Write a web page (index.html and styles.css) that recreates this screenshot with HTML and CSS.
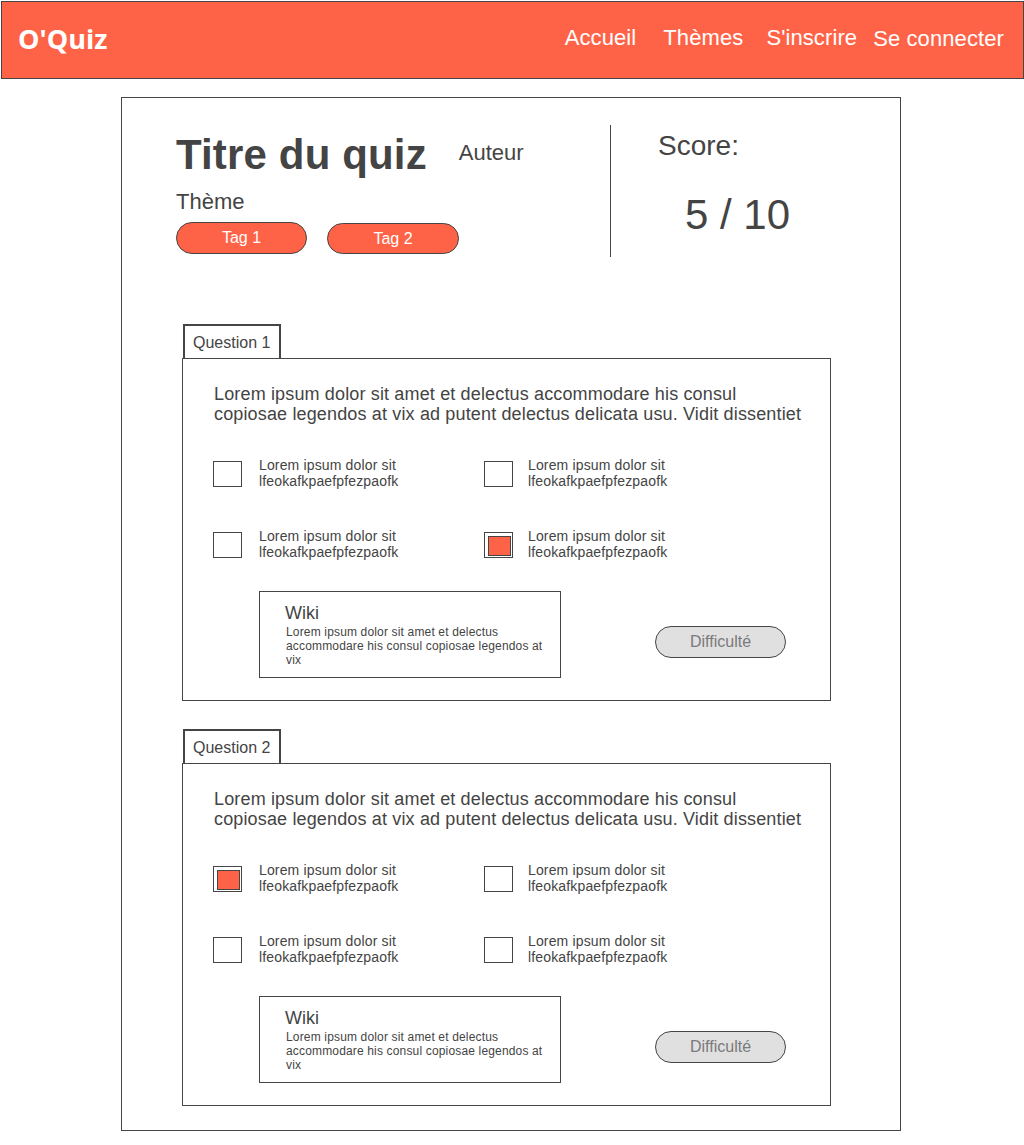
FILE: index.html
```html
<!DOCTYPE html>
<html lang="fr">
<head>
<meta charset="utf-8">
<title>O'Quiz</title>
<link rel="stylesheet" href="styles.css">
</head>
<body>
<header class="topbar">
  <div class="logo">O'Quiz</div>
  <nav class="nav">
    <a class="nav-link nav-link--home" href="#">Accueil</a>
    <a class="nav-link nav-link--themes" href="#">Thèmes</a>
    <a class="nav-link nav-link--signup" href="#">S'inscrire</a>
    <a class="nav-link nav-link--login" href="#">Se connecter</a>
  </nav>
</header>

<main class="quiz">
  <section class="quiz-head">
    <div class="quiz-info">
      <div class="title-row">
        <h1 class="quiz-title">Titre du quiz</h1>
        <span class="quiz-author">Auteur</span>
      </div>
      <div class="quiz-theme">Thème</div>
      <div class="tags">
        <span class="tag">Tag 1</span>
        <span class="tag tag--second">Tag 2</span>
      </div>
    </div>
    <div class="score">
      <div class="score-label">Score:</div>
      <div class="score-value">5 / 10</div>
    </div>
  </section>

  <section class="questions">
    <article class="question">
      <div class="question-tab">Question 1</div>
      <div class="question-box">
        <p class="question-text">Lorem ipsum dolor sit amet et delectus accommodare his consul copiosae legendos at vix ad putent delectus delicata usu. Vidit dissentiet</p>
        <div class="answers">
          <label class="answer"><span class="check"></span><span class="answer-text">Lorem ipsum dolor sit<br>lfeokafkpaefpfezpaofk</span></label>
          <label class="answer"><span class="check"></span><span class="answer-text">Lorem ipsum dolor sit<br>lfeokafkpaefpfezpaofk</span></label>
          <label class="answer"><span class="check"></span><span class="answer-text">Lorem ipsum dolor sit<br>lfeokafkpaefpfezpaofk</span></label>
          <label class="answer"><span class="check check--on"></span><span class="answer-text">Lorem ipsum dolor sit<br>lfeokafkpaefpfezpaofk</span></label>
        </div>
        <div class="question-foot">
          <div class="wiki">
            <div class="wiki-title">Wiki</div>
            <p class="wiki-text">Lorem ipsum dolor sit amet et delectus accommodare his consul copiosae legendos at vix</p>
          </div>
          <span class="difficulty">Difficulté</span>
        </div>
      </div>
    </article>

    <article class="question">
      <div class="question-tab">Question 2</div>
      <div class="question-box">
        <p class="question-text">Lorem ipsum dolor sit amet et delectus accommodare his consul copiosae legendos at vix ad putent delectus delicata usu. Vidit dissentiet</p>
        <div class="answers">
          <label class="answer"><span class="check check--on"></span><span class="answer-text">Lorem ipsum dolor sit<br>lfeokafkpaefpfezpaofk</span></label>
          <label class="answer"><span class="check"></span><span class="answer-text">Lorem ipsum dolor sit<br>lfeokafkpaefpfezpaofk</span></label>
          <label class="answer"><span class="check"></span><span class="answer-text">Lorem ipsum dolor sit<br>lfeokafkpaefpfezpaofk</span></label>
          <label class="answer"><span class="check"></span><span class="answer-text">Lorem ipsum dolor sit<br>lfeokafkpaefpfezpaofk</span></label>
        </div>
        <div class="question-foot">
          <div class="wiki">
            <div class="wiki-title">Wiki</div>
            <p class="wiki-text">Lorem ipsum dolor sit amet et delectus accommodare his consul copiosae legendos at vix</p>
          </div>
          <span class="difficulty">Difficulté</span>
        </div>
      </div>
    </article>
  </section>
</main>
</body>
</html>
```

FILE: styles.css
```css
* { box-sizing: border-box; }

html, body {
  margin: 0;
  padding: 0;
  background: #ffffff;
}

body {
  font-family: "Liberation Sans", Arial, sans-serif;
  color: #444444;
}

/* ---------- Top bar ---------- */
.topbar {
  margin: 1px 0 0 1px;
  width: 1023px;
  height: 78px;
  background: #ff6347;
  border: 1px solid #454545;
  display: flex;
  align-items: center;
  padding: 0 0 0 16px;
}

.logo {
  font-family: "Open Sans", "Noto Sans", sans-serif;
  font-weight: 700;
  font-size: 27px;
  line-height: 30px;
  color: #ffffff;
  margin-top: -3px;
}

.nav {
  display: flex;
  align-items: center;
  margin-left: auto;
  margin-right: 19px;
}

.nav-link {
  font-size: 22px;
  line-height: 26px;
  color: #ffffff;
  text-decoration: none;
  margin-top: -4px;
  letter-spacing: 0.1px;
}

.nav-link--themes { margin-left: 27px; }
.nav-link--signup { margin-left: 23px; }
.nav-link--login { margin-left: 16px; margin-top: -2px; }

/* ---------- Quiz card ---------- */
.quiz {
  margin: 18px 0 0 121px;
  width: 780px;
  height: 1034px;
  border: 1px solid #454545;
  padding: 27px 0 0 0;
}

.quiz-head {
  display: flex;
  height: 132px;
}

.quiz-info {
  width: 488px;
  padding: 6px 0 0 54px;
}

.title-row {
  display: flex;
  align-items: flex-start;
}

.quiz-title {
  margin: 0;
  font-size: 42px;
  line-height: 48px;
  font-weight: 700;
  color: #444444;
  letter-spacing: 0.15px;
}

.quiz-author {
  margin: 9px 0 0 32px;
  font-size: 22px;
  line-height: 26px;
}

.quiz-theme {
  margin-top: 10px;
  font-size: 22px;
  line-height: 26px;
}

.tags {
  display: flex;
  margin-top: 7px;
}

.tag {
  width: 131px;
  height: 32px;
  border-radius: 16px;
  background: #ff6347;
  border: 1px solid #454545;
  color: #ffffff;
  font-size: 16px;
  line-height: 30px;
  text-align: center;
}

.tag--second {
  margin-left: 20px;
  margin-top: 1px;
  height: 31px;
  width: 132px;
  line-height: 29px;
}

.score {
  flex: 1;
  border-left: 1px solid #454545;
  padding: 5px 0 0 47px;
}

.score-label {
  font-size: 28px;
  line-height: 32px;
}

.score-value {
  margin: 29px 0 0 27px;
  font-size: 42px;
  line-height: 48px;
}

/* ---------- Questions ---------- */
.questions {
  margin: 67px 0 0 60px;
  width: 649px;
}

.question + .question {
  margin-top: 28px;
}

.question-tab {
  margin-left: 1px;
  width: 98px;
  height: 34px;
  border: 2px solid #454545;
  border-bottom: none;
  padding: 8px 0 0 8px;
  font-size: 16px;
  line-height: 18px;
}

.question-box {
  border: 1px solid #454545;
  height: 343px;
  padding: 25px 0 0 31px;
}

.question-text {
  margin: 0;
  width: 598px;
  font-size: 18px;
  line-height: 20px;
  letter-spacing: 0.15px;
}

.answers {
  margin: 33px 0 0 -1px;
  display: grid;
  grid-template-columns: 271px 271px;
  row-gap: 39px;
}

.answer {
  display: flex;
  align-items: flex-start;
  height: 32px;
}

.check {
  flex: none;
  width: 29px;
  height: 26px;
  margin-top: 4px;
  border: 1px solid #454545;
  background: #ffffff;
  padding: 3px;
}

.check--on::after {
  content: "";
  display: block;
  width: 100%;
  height: 100%;
  background: #ff6347;
  border: 1px solid #454545;
}

.answer-text {
  margin-left: 17px;
  font-size: 14px;
  line-height: 16px;
  letter-spacing: 0.15px;
}

.answer:nth-child(2n) .answer-text {
  margin-left: 15px;
}

.question-foot {
  display: flex;
  align-items: flex-start;
  margin: 31px 0 0 45px;
}

.wiki {
  width: 302px;
  height: 87px;
  border: 1px solid #454545;
  padding: 11px 0 0 25px;
}

.wiki-title {
  font-size: 18px;
  line-height: 20px;
}

.wiki-text {
  margin: 2px 0 0 1px;
  width: 266px;
  font-size: 12px;
  line-height: 14px;
  letter-spacing: 0.16px;
}

.difficulty {
  margin: 35px 0 0 94px;
  width: 131px;
  height: 32px;
  border-radius: 16px;
  border: 1px solid #454545;
  background: #e0e0e0;
  color: #7a7a7a;
  font-size: 16px;
  line-height: 29px;
  text-align: center;
}
```
